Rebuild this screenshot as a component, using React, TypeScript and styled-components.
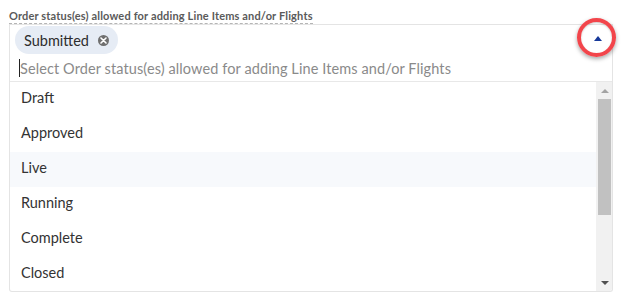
import React from "react";
import styled, { createGlobalStyle } from "styled-components";

const GlobalStyle = createGlobalStyle`
  body {
    margin: 0;
    background: #ffffff;
    font-family: "Lato", "Noto Sans", sans-serif;
  }
`;

const FieldWrapper = styled.div`
  position: relative;
  width: 604px;
  padding: 4px 0 0 9px;
`;

const FieldLabel = styled.label`
  display: inline-block;
  font-size: 11px;
  font-weight: 700;
  letter-spacing: 0.16px;
  line-height: 12px;
  color: #5a5a5a;
  border-bottom: 1px dashed #b5b5b5;
  padding-bottom: 1px;
`;

const Control = styled.div`
  border: 1px solid #e4e4e4;
  border-bottom: none;
  display: flex;
  flex-direction: column;
`;

const TagsRow = styled.div`
  display: flex;
  align-items: center;
  padding: 1px 40px 1px 5px;
  height: 28px;
`;

const Chip = styled.span`
  display: inline-flex;
  align-items: center;
  gap: 9px;
  height: 28px;
  padding: 0 9px;
  border-radius: 14px;
  background: #e6ecf5;
  color: #2d2d2d;
  font-size: 14.5px;
`;

const ChipClose = styled.span`
  width: 11px;
  height: 11px;
  border-radius: 50%;
  background: #6f6f6f;
  display: inline-flex;
  align-items: center;
  justify-content: center;
`;

const InputRow = styled.div`
  height: 26px;
  display: flex;
  align-items: center;
  padding-left: 9px;
  border-bottom: 1px solid #e8e8e8;
`;

const Caret = styled.span`
  width: 1px;
  height: 18px;
  background: #222;
`;

const Placeholder = styled.span`
  color: #8a8a8a;
  font-size: 14.5px;
  letter-spacing: 0.1px;
`;

const ToggleArrow = styled.span`
  position: absolute;
  top: 36px;
  left: 594px;
  width: 0;
  height: 0;
  border-left: 4px solid transparent;
  border-right: 4px solid transparent;
  border-bottom: 5px solid #17399a;
`;

const Highlight = styled.span`
  position: absolute;
  top: 18px;
  left: 577px;
  width: 31px;
  height: 31px;
  border: 4px solid #f2454b;
  border-radius: 50%;
  box-shadow: 0 2px 4px rgba(0, 0, 0, 0.35), inset 0 1px 2px rgba(0, 0, 0, 0.2);
  pointer-events: none;
`;

const Menu = styled.div`
  display: flex;
  height: 209px;
  border: 1px solid #e4e4e4;
  border-top: none;
  border-radius: 0 0 3px 3px;
  overflow: hidden;
`;

const OptionList = styled.ul`
  flex: 1;
  margin: 0;
  padding: 0;
  list-style: none;
`;

const Option = styled.li<{ $active?: boolean }>`
  height: 35px;
  display: flex;
  align-items: center;
  padding-left: 11px;
  padding-bottom: 4px;
  box-sizing: border-box;
  font-size: 14.5px;
  color: #333333;
  background: ${(p) => (p.$active ? "#f7f9fc" : "transparent")};
`;

const ScrollTrack = styled.div`
  width: 16px;
  background: #f1f1f1;
  display: flex;
  flex-direction: column;
`;

const ScrollButton = styled.div`
  height: 17px;
  display: flex;
  align-items: center;
  justify-content: center;
`;

const ScrollArrow = styled.span<{ $down?: boolean }>`
  width: 0;
  height: 0;
  margin-left: 1px;
  border-left: 4px solid transparent;
  border-right: 4px solid transparent;
  ${(p) =>
    p.$down
      ? "border-top: 4px solid #505050;"
      : "border-bottom: 4px solid #a3a3a3;"}
`;

const ScrollThumb = styled.div`
  height: 116px;
  margin: 0 1px 0 2px;
  background: #c1c1c1;
`;

const ScrollSpacer = styled.div`
  flex: 1;
`;

const statuses = ["Draft", "Approved", "Live", "Running", "Complete", "Closed"];

const App = () => {
  return (
    <>
      <GlobalStyle />
      <FieldWrapper>
        <FieldLabel>Order status(es) allowed for adding Line Items and/or Flights</FieldLabel>
        <Control>
          <TagsRow>
            <Chip>
              Submitted
              <ChipClose>
                <svg width="7" height="7" viewBox="0 0 7 7">
                  <path d="M1 1 L6 6 M6 1 L1 6" stroke="#fff" strokeWidth="1.6" strokeLinecap="round" />
                </svg>
              </ChipClose>
            </Chip>
          </TagsRow>
          <InputRow>
            <Caret />
            <Placeholder>Select Order status(es) allowed for adding Line Items and/or Flights</Placeholder>
          </InputRow>
        </Control>
        <ToggleArrow />
        <Highlight />
        <Menu>
          <OptionList>
            {statuses.map((s) => (
              <Option key={s} $active={s === "Live"}>
                {s}
              </Option>
            ))}
          </OptionList>
          <ScrollTrack>
            <ScrollButton>
              <ScrollArrow />
            </ScrollButton>
            <ScrollThumb />
            <ScrollSpacer />
            <ScrollButton>
              <ScrollArrow $down />
            </ScrollButton>
          </ScrollTrack>
        </Menu>
      </FieldWrapper>
    </>
  );
};

export default App;
